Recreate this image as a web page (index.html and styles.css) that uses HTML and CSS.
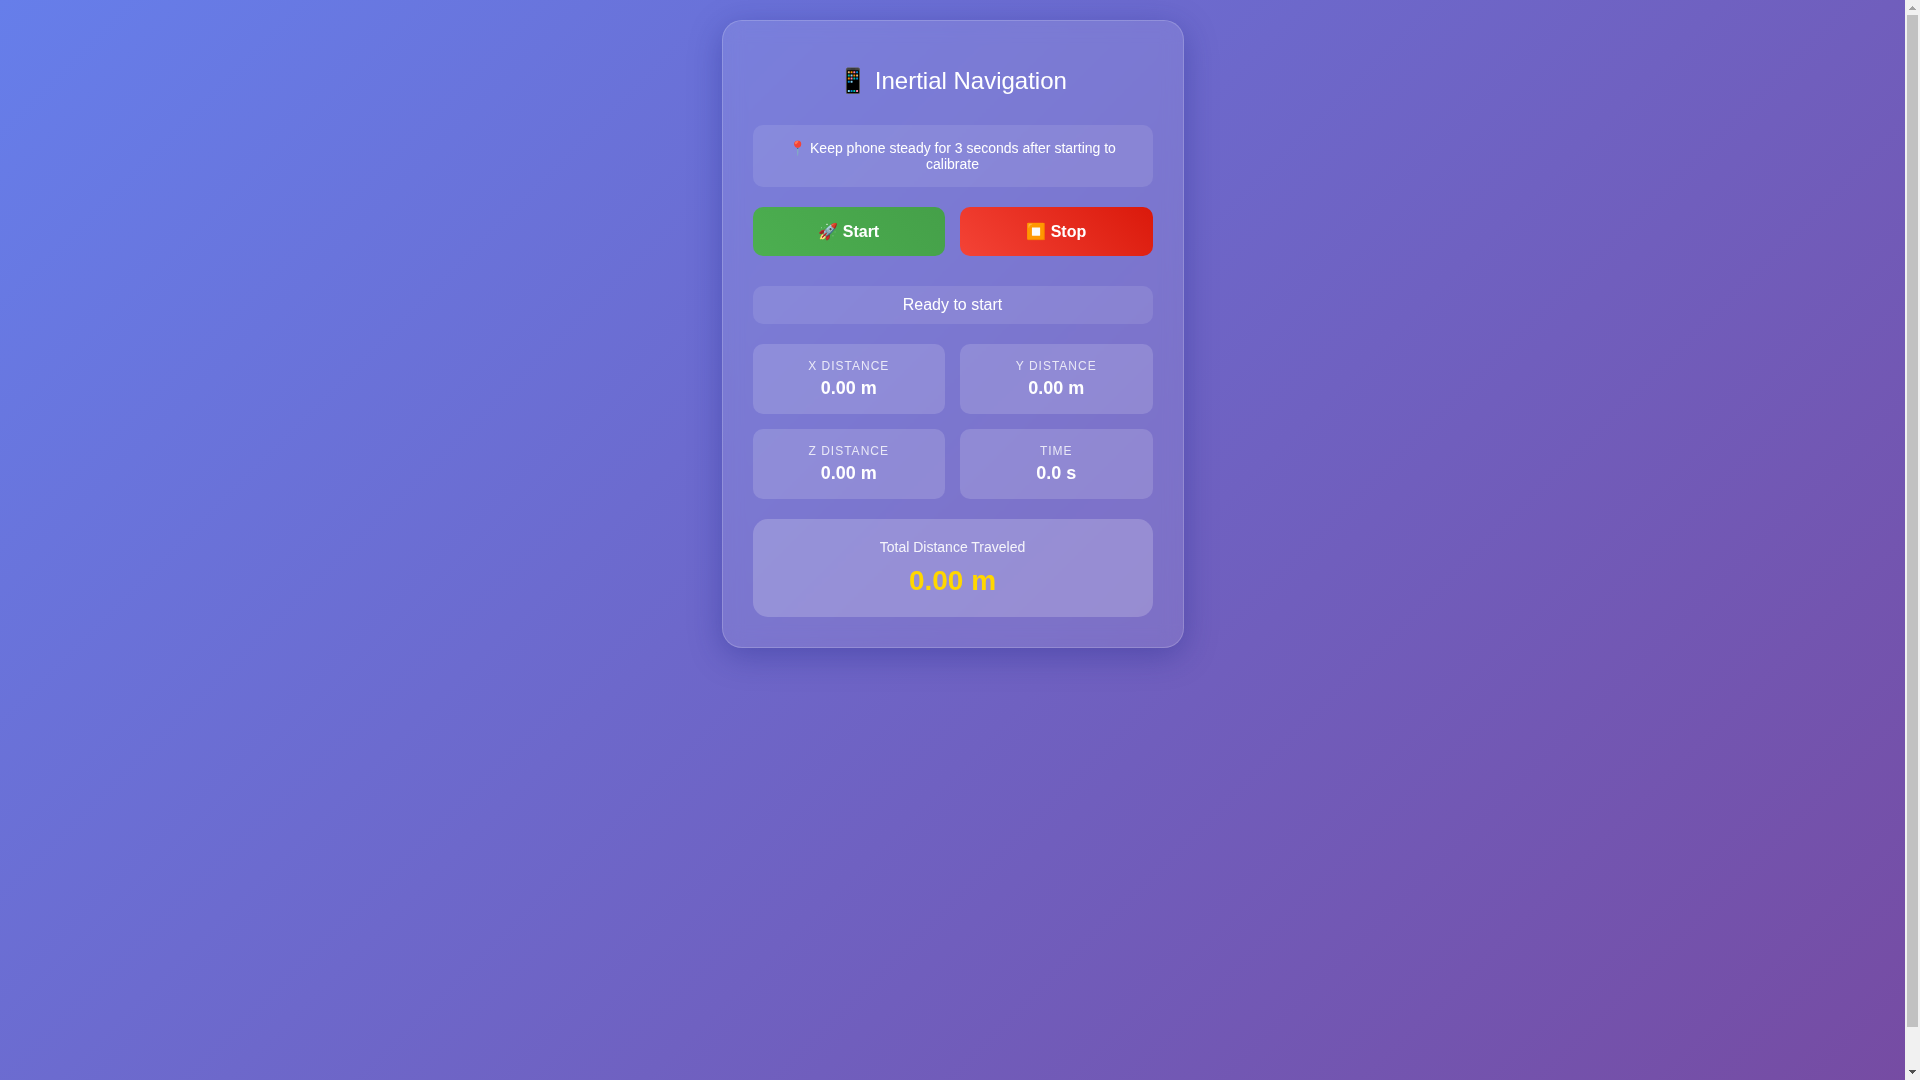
FILE: index.html
```html
<!DOCTYPE html>
<html lang="en">
<head>
<meta charset="utf-8">
<meta name="viewport" content="width=device-width, initial-scale=1">
<title>Inertial Navigation</title>
<link rel="stylesheet" href="styles.css">
</head>
<body>
<div class="page">
<main class="container">
  <h1 class="title">📱 Inertial Navigation</h1>
  <p class="instructions">📍 Keep phone steady for 3 seconds after starting to calibrate</p>
  <div class="controls">
    <button type="button" class="btn btn-start">🚀 Start</button>
    <button type="button" class="btn btn-stop">⏹️ Stop</button>
  </div>
  <div class="status" role="status">Ready to start</div>
  <div class="data-grid">
    <div class="data-item"><div class="data-label">X Distance</div><div class="data-value">0.00 m</div></div>
    <div class="data-item"><div class="data-label">Y Distance</div><div class="data-value">0.00 m</div></div>
    <div class="data-item"><div class="data-label">Z Distance</div><div class="data-value">0.00 m</div></div>
    <div class="data-item"><div class="data-label">Time</div><div class="data-value">0.0 s</div></div>
  </div>
  <section class="total">
    <div class="total-label">Total Distance Traveled</div>
    <div class="total-value">0.00 m</div>
  </section>
</main>
</div>
<div class="scrollbar" aria-hidden="true">
  <svg class="arrow arrow-up" viewBox="0 0 15 15" shape-rendering="crispEdges"><path d="M7 6h1v1h1v1h1v1h1v1H4V9h1V8h1V7h1z"/></svg>
  <div class="track"><div class="thumb"></div></div>
  <svg class="arrow arrow-down" viewBox="0 0 15 15" shape-rendering="crispEdges"><path d="M4 5h7v1h-1v1H9v1H8v1H7V8H6V7H5V6H4z"/></svg>
</div>
</body>
</html>
```
FILE: styles.css
```css
html {
  scrollbar-width: none;
}

body {
  display: flex;
  align-items: flex-start;
  margin: 0;
  font-family: "Liberation Sans", Arial, sans-serif;
  color: white;
}

.page {
  flex: 1;
  min-width: 0;
  min-height: 100vh;
  padding: 20px;
  background: linear-gradient(135deg, #667eea 0%, #764ba2 100%);
}

.container {
  max-width: 400px;
  margin: 0 auto;
  padding: 30px;
  border: 1px solid rgba(255, 255, 255, 0.18);
  border-radius: 20px;
  background: rgba(255, 255, 255, 0.1);
  backdrop-filter: blur(10px);
  box-shadow: 0 8px 32px rgba(31, 38, 135, 0.37);
}

.title {
  margin: 16px 0 30px;
  font-size: 24px;
  font-weight: 300;
  text-align: center;
}

.instructions {
  margin: 0 0 20px;
  padding: 15px;
  border-radius: 10px;
  background: rgba(255, 255, 255, 0.1);
  font-size: 14px;
  text-align: center;
}

.controls {
  display: grid;
  grid-template-columns: 1fr 1fr;
  gap: 15px;
  margin-bottom: 30px;
}

.btn {
  padding: 15px;
  border: none;
  border-radius: 10px;
  color: white;
  font-family: inherit;
  font-size: 16px;
  font-weight: 600;
  cursor: pointer;
}

.btn-start {
  background: linear-gradient(45deg, #4caf50, #45a049);
}

.btn-stop {
  background: linear-gradient(45deg, #f44336, #da190b);
}

.status {
  margin-bottom: 20px;
  padding: 10px;
  border-radius: 10px;
  background: rgba(255, 255, 255, 0.1);
  font-size: 16px;
  text-align: center;
}

.data-grid {
  display: grid;
  grid-template-columns: 1fr 1fr;
  gap: 15px;
  margin-bottom: 20px;
}

.data-item {
  padding: 15px;
  border-radius: 10px;
  background: rgba(255, 255, 255, 0.15);
  text-align: center;
}

.data-label {
  margin-bottom: 5px;
  font-size: 12px;
  letter-spacing: 1px;
  text-transform: uppercase;
  opacity: 0.8;
}

.data-value {
  font-size: 18px;
  font-weight: 600;
}

.total {
  padding: 20px;
  border-radius: 15px;
  background: rgba(255, 255, 255, 0.2);
  text-align: center;
}

.total-label {
  margin-bottom: 10px;
  font-size: 14px;
  opacity: 0.9;
}

.total-value {
  color: #ffd700;
  font-size: 28px;
  font-weight: 700;
}

.scrollbar {
  position: sticky;
  top: 0;
  display: flex;
  flex-direction: column;
  width: 15px;
  height: 100vh;
  background: #f1f1f1;
}

.arrow {
  display: block;
  width: 15px;
  height: 15px;
}

.arrow-up {
  fill: #a3a3a3;
}

.arrow-down {
  fill: #505050;
}

.track {
  flex: 1;
  padding: 0 2px;
}

.thumb {
  height: 96.4%;
  background: #c1c1c1;
}
```
